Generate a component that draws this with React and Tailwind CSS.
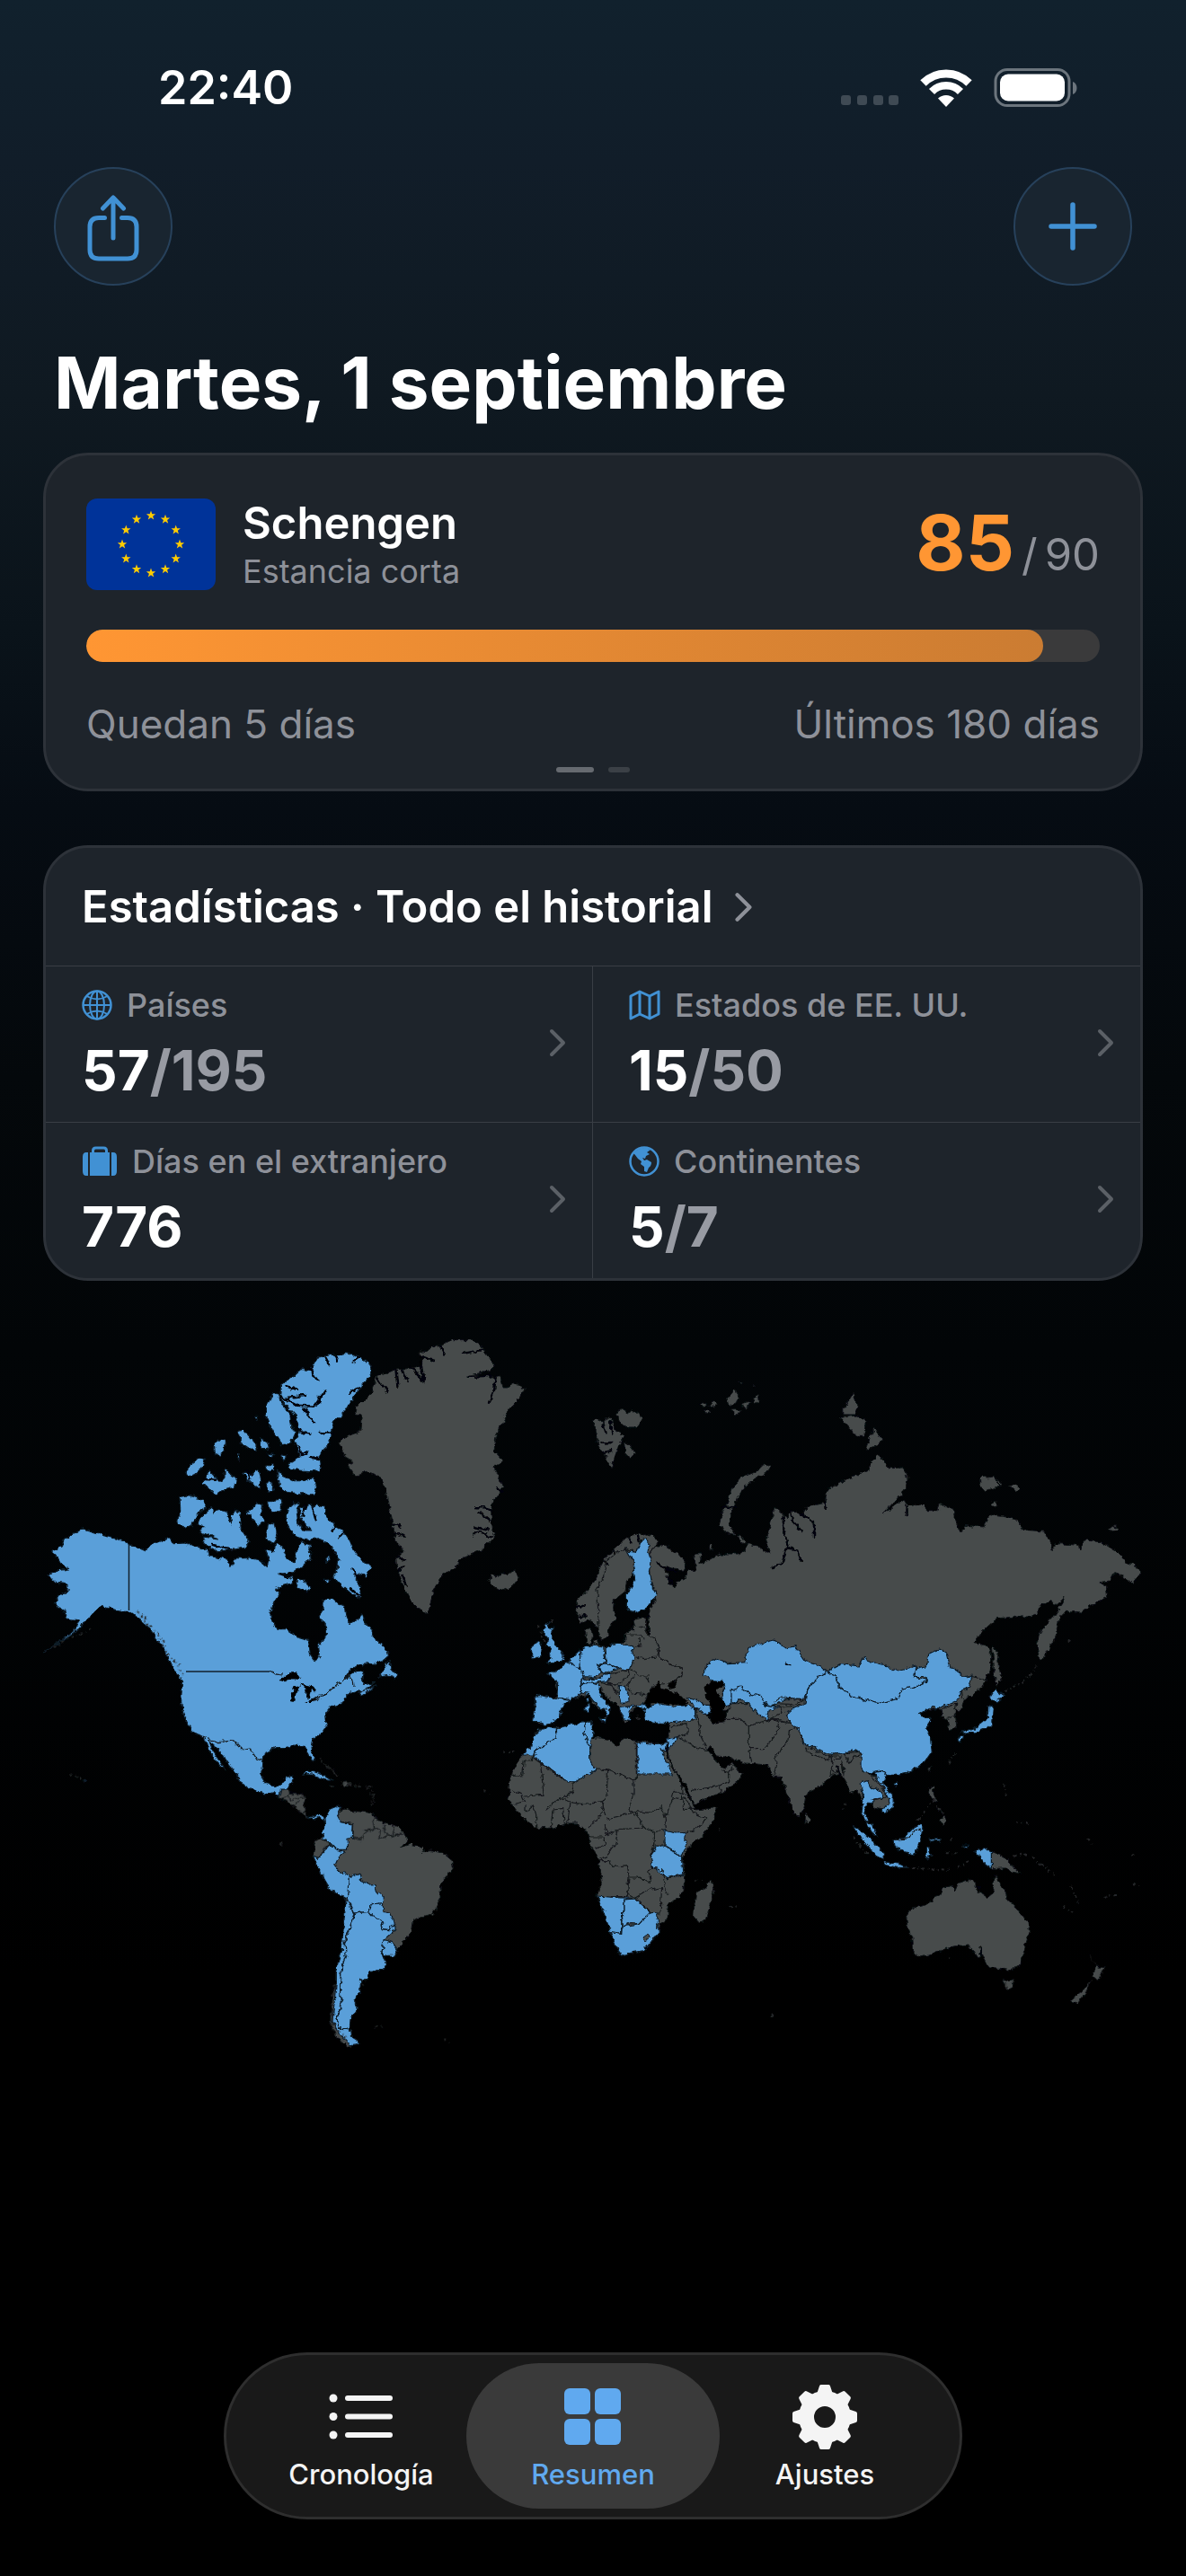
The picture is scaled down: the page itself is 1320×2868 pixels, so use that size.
import React from 'react';

const stats = [
  { icon: GlobeIcon, label: 'Países', value: '57', total: '/195' },
  { icon: MapIcon, label: 'Estados de EE. UU.', value: '15', total: '/50' },
  { icon: SuitcaseIcon, label: 'Días en el extranjero', value: '776', total: '' },
  { icon: AmericasIcon, label: 'Continentes', value: '5', total: '/7' },
];

const tabs = [
  { icon: ListIcon, label: 'Cronología' },
  { icon: GridIcon, label: 'Resumen', active: true },
  { icon: GearIcon, label: 'Ajustes' },
];

function SignalDots() {
  return (
    <svg className="h-3 w-16" viewBox="0 0 64 12" fill="#3f4a54">
      {[0, 18, 36, 53].map((x) => (
        <rect key={x} x={x} width="11" height="11" rx="3" />
      ))}
    </svg>
  );
}

function WifiIcon() {
  return (
    <svg className="h-11 w-[58px]" viewBox="0 0 58 44" fill="none" stroke="#fff">
      <path d="M3.500 16.500A36 36 0 0 1 54.500 16.500" strokeWidth="9" />
      <path d="M13 26A22.500 22.500 0 0 1 45 26" strokeWidth="8.500" />
      <path d="M29 43L20 33.500A13 13 0 0 1 38 33.500Z" fill="#fff" stroke="none" />
    </svg>
  );
}

function BatteryIcon() {
  return (
    <svg className="h-11 w-[94px]" viewBox="0 0 94 44">
      <rect x="2" y="1.500" width="82" height="40" rx="13" fill="none" stroke="#6c757d" strokeWidth="3" />
      <rect x="7" y="6.500" width="72" height="30" rx="9" fill="#fff" />
      <path d="M88 15C94 17 94 27 88 29Z" fill="#6c757d" />
    </svg>
  );
}

function ShareIcon() {
  return (
    <svg
      className="h-20 w-16"
      viewBox="0 0 64 80"
      fill="none"
      stroke="#4191d4"
      strokeWidth="5"
      strokeLinecap="round"
      strokeLinejoin="round"
    >
      <path d="M22.500 30.500H16Q6 30.500 6 40.500V66Q6 76 16 76H48Q58 76 58 66V40.500Q58 30.500 48 30.500H41.500" />
      <path d="M32 53V9M20.500 20L32 8L43.500 20" />
    </svg>
  );
}

function PlusIcon() {
  return (
    <svg className="h-14 w-14" viewBox="0 0 56 56" stroke="#4191d4" strokeWidth="5.500" strokeLinecap="round">
      <path d="M28 4V52M4 28H52" />
    </svg>
  );
}

function GlobeIcon() {
  return (
    <svg className="h-[34px] w-[34px]" viewBox="0 0 34 34" fill="none" stroke="#4191d4" strokeWidth="2">
      <circle cx="17" cy="17" r="15.500" strokeWidth="2.500" />
      <ellipse cx="17" cy="17" rx="8" ry="15.500" />
      <path d="M17 1.500V32.500M1.500 17H32.500M5.500 7Q17 14 28.500 7M5.500 27Q17 20 28.500 27" />
    </svg>
  );
}

function MapIcon() {
  return (
    <svg
      className="h-[34px] w-[35px]"
      viewBox="0 0 35 34"
      fill="none"
      stroke="#4191d4"
      strokeWidth="3"
      strokeLinejoin="round"
    >
      <path d="M2 7L12 2L23 7L33 2V27L23 32L12 27L2 32ZM12 2V27M23 7V32" />
    </svg>
  );
}

function SuitcaseIcon() {
  return (
    <svg className="h-[34px] w-10" viewBox="0 0 40 34" fill="#4191d4">
      <path d="M12.500 7V5Q12.500 2 15.500 2H24.500Q27.500 2 27.500 5V7" fill="none" stroke="#4191d4" strokeWidth="3" />
      <rect x="9" y="7" width="22" height="26" />
      <path d="M7 7V33H5Q1 33 1 28V12Q1 7 5 7ZM33 7V33H35Q39 33 39 28V12Q39 7 35 7Z" />
    </svg>
  );
}

function AmericasIcon() {
  return (
    <svg className="h-[34px] w-[34px]" viewBox="0 0 34 34" fill="#4191d4">
      <circle cx="17" cy="17" r="15.500" fill="none" stroke="#4191d4" strokeWidth="2.500" />
      <path d="M5 8Q10 2 18 2L24 4L20 7L23 9L19 11L18 14L15 13L17 16L20 15L25 18Q25 22 22 24L20 29L17 28L17 23L13 20L14 17L10 14L7 10Z" />
    </svg>
  );
}

function Chevron({ className }) {
  return (
    <svg
      className={className}
      viewBox="0 0 20 32"
      fill="none"
      stroke="currentColor"
      strokeWidth="4"
      strokeLinecap="round"
      strokeLinejoin="round"
    >
      <path d="M3 3L16 16L3 29" />
    </svg>
  );
}

function ListIcon() {
  return (
    <svg className="h-[72px] w-[72px]" viewBox="0 0 72 72" fill="#f4f4f4">
      {[15, 35.500, 56].map((y) => (
        <g key={y}>
          <circle cx="5" cy={y} r="4.500" />
          <rect x="18" y={y - 3} width="53" height="6" rx="3" />
        </g>
      ))}
    </svg>
  );
}

function GridIcon() {
  return (
    <svg className="h-[72px] w-[72px]" viewBox="0 0 72 72" fill="#60a9ef">
      <rect x="4" y="4" width="29" height="29" rx="6" />
      <rect x="38" y="4" width="29" height="29" rx="6" />
      <rect x="4" y="38" width="29" height="29" rx="6" />
      <rect x="38" y="38" width="29" height="29" rx="6" />
    </svg>
  );
}

function GearIcon() {
  return (
    <svg className="h-[72px] w-[72px]" viewBox="-36 -36 72 72">
      <circle r="20.500" fill="none" stroke="#f4f4f4" strokeWidth="17" />
      {[0, 45, 90, 135, 180, 225, 270, 315].map((a) => (
        <path
          key={a}
          transform={`rotate(${a})`}
          d="M-7 -25L-4 -34H4L7 -25Z"
          fill="#f4f4f4"
          stroke="#f4f4f4"
          strokeWidth="4"
          strokeLinejoin="round"
        />
      ))}
    </svg>
  );
}

function EuFlag() {
  const stars = Array.from({ length: 12 }, (_, i) => {
    const a = (i * Math.PI) / 6;
    return [72 + 32 * Math.sin(a), 51 - 32 * Math.cos(a)];
  });
  return (
    <svg className="h-[102px] w-36 rounded-xl" viewBox="0 0 144 102">
      <rect width="144" height="102" fill="#039" />
      {stars.map(([x, y]) => (
        <path
          key={`${x}-${y}`}
          transform={`translate(${x} ${y})`}
          d="M0 -5.500L1.300 -1.700L5.200 -1.700L2.100 .7L3.200 4.500L0 2.200L-3.200 4.500L-2.100 .7L-5.200 -1.700L-1.300 -1.700Z"
          fill="#fc0"
        />
      ))}
    </svg>
  );
}

// Each region of the map has its own grid, so its shapes share one transform.
const regions = {
  north: 'translate(0 -10) scale(.33333 .35714)',
  greenland: 'translate(320 -10) scale(.33333)',
  south: 'translate(240 480) scale(.33333)',
  russia: 'translate(600 50) scale(.42088 .33333)',
  west: 'translate(520 220) scale(.33333)',
  east: 'translate(720 320) scale(.34438 .33333)',
};

const land = [
  ['russia', 'M195 570L240 575L275 600L295 630L285 655L250 650L220 632L245 665L250 700L265 712L270 690L290 685L300 655L320 655L315 600L335 600L330 635L350 625L385 600L430 600L450 590L452 565L485 575L515 600L505 550L520 480L530 445L548 465L560 480L570 455L600 470L615 440L660 430L668 385L720 350L780 320L780 300L800 268L820 290L828 315L865 312L880 345L875 380L845 425L815 465L870 420L880 440L915 435L930 455L960 455L965 430L1000 450L1005 490L1020 530L1035 505L1080 510L1095 470L1130 475L1165 485L1190 520L1240 525L1255 560L1262 590L1270 565L1320 570L1340 585L1345 555L1390 560L1430 590L1460 630L1485 640L1495 665L1475 700L1450 675L1425 665L1415 690L1385 695L1405 710L1408 745L1360 775L1340 795L1300 790L1280 815L1270 880L1240 945L1228 955L1220 900L1235 850L1265 810L1290 765L1295 745L1275 770L1255 760L1235 765L1210 810L1170 810L1115 815L1085 850L1055 895L1085 905L1098 920L1100 985L1085 1020L1060 1065L1030 1085L1020 1120L200 1120L195 800L215 740L200 680Z'],
  ['russia', 'M500 300L517 305L505 330L465 360L440 385L425 430L410 470L410 510L425 535L400 530L380 505L390 460L402 430L415 380L440 345L480 325Z'],
  ['russia', 'M428 540L440 540L450 560L445 568Z'],
  ['russia', 'M48 155L60 150L75 165L80 150L95 145L105 185L130 205L115 240L95 315L78 270L60 230ZM108 130L125 118L140 130L150 118L180 145L165 180L140 180L115 155ZM130 225L145 235L158 265L145 282L132 262Z'],
  ['russia', 'M330 100L345 98L345 108L335 110ZM350 105L372 88L376 100L366 112L358 106ZM340 120L358 122L350 135ZM402 82L425 48L432 75L425 100L405 104ZM442 98L465 90L455 115L446 112ZM470 85L485 70L488 90L475 98ZM412 120L438 118L428 136ZM430 28L440 26L438 32ZM468 36L478 38L472 42Z'],
  ['russia', 'M710 115L735 65L748 110L740 135L710 135ZM700 145L745 138L768 155L765 205L745 205L722 175ZM768 250L790 180L812 220L800 238Z'],
  ['russia', 'M1070 345L1080 338L1090 348L1110 345L1120 375L1085 390L1072 370ZM1145 370L1160 368L1178 380L1165 390ZM1115 350L1130 360L1125 378ZM1100 430L1110 424L1118 438L1108 446ZM1408 515L1425 505L1437 518L1418 526ZM355 582L358 570L366 575L362 588Z'],
  ['russia', 'M1103 905L1118 930L1120 980L1130 1010L1114 1040L1108 980Z'],
  ['west', 'M245 240L270 225L300 190L322 145L335 110L370 75L410 40L455 18L475 28L500 25L515 50L490 90L445 90L430 85L435 150L440 158L412 180L408 215L370 245L368 275L378 305L355 335L345 370L328 378L318 345L306 322L285 310L260 325L245 300Z'],
  ['west', 'M275 345L295 340L298 365L295 390L278 390ZM304 380L318 375L318 390L306 390Z'],
  ['west', 'M475 300L435 310L440 335L425 345L408 358L408 385L375 392L340 400L300 390L285 405L258 410L245 435L215 455L180 480L148 490L175 512L180 560L165 572L105 565L105 650L135 660L180 640L190 605L225 578L245 570L285 560L300 590L340 615L345 630L330 645L345 640L360 610L330 580L315 545L325 535L345 570L385 600L395 630L405 655L418 655L420 625L450 600L470 590L480 560L500 530L565 520L595 500L600 475L560 460L520 430L520 410L510 372L478 360Z'],
  ['west', 'M555 655L600 645L640 645L645 580L700 655L740 650L760 590L900 590L1200 600L1200 780L1170 820L1110 825L1080 850L1010 895L1005 940L985 970L965 945L950 900L935 860L930 835L905 835L880 795L800 788L760 770L715 765L690 730L680 745L720 795L740 808L765 785L775 805L800 825L775 860L720 890L640 925L630 910L610 860L575 815L560 780L548 745L552 700Z'],
  ['west', 'M1010 955L1025 980L1018 992L1008 990Z'],
  ['west', 'M130 672L175 670L225 660L295 650L300 690L290 705L330 705L385 730L400 705L445 715L490 722L545 722L540 740L560 790L600 870L625 920L640 945L712 938L705 975L670 1025L620 1070L598 1105L605 1160L603 1220L550 1260L550 1310L525 1325L520 1355L470 1415L440 1420L395 1430L378 1405L360 1350L340 1300L312 1235L330 1180L320 1110L290 1070L285 1020L245 990L215 990L165 1005L115 1008L70 975L30 930L18 905L25 830L60 765L95 730L105 690Z'],
  ['west', 'M693 1180L705 1215L690 1270L675 1310L655 1323L635 1300L643 1225L670 1210Z'],
  ['east', 'M-5 560L20 600L40 640L5 640L0 620ZM480 460L580 450L600 530L640 535L668 600L668 625L650 645L620 640L605 600L578 560L585 640L575 600L560 580L540 590L530 555L515 530L500 515L480 530Z'],
  ['east', 'M900 235L935 200L980 210L960 240L935 268L905 272Z'],
  ['east', 'M835 310L885 288L880 320L885 370L860 378L855 345L835 330Z'],
  ['east', 'M795 510L805 492L800 522ZM798 570L808 568L812 598L822 615L805 610L797 595ZM832 685L845 665L852 680L842 698ZM820 630L830 640L826 650ZM835 645L842 655L838 662Z'],
  ['east', 'M997 785L1035 800L1060 825L1070 840L1090 858L1065 852L1045 840L1030 840L997 842Z'],
  ['east', 'M722 1000L745 970L805 955L815 935L830 930L840 905L865 900L880 915L890 890L925 878L950 885L945 910L985 938L1000 925L1010 860L1025 900L1040 910L1050 945L1085 980L1090 995L1115 1015L1120 1055L1105 1110L1085 1170L1050 1180L1030 1175L990 1170L970 1130L955 1140L945 1125L920 1095L850 1105L825 1120L765 1135L742 1120L740 1070L725 1030Z'],
  ['east', 'M1035 1212L1052 1218L1070 1210L1065 1240L1050 1245ZM1312 1130L1330 1155L1340 1170L1365 1172L1340 1215L1325 1200L1335 1165ZM1320 1215L1300 1260L1275 1292L1252 1280L1290 1250Z'],
  ['south', 'M88 120L103 95L118 90L128 112L160 112L180 122L175 150L178 170L190 192L165 175L145 155L118 135L95 130ZM298 74L318 72L330 82L305 86ZM262 84L280 86L270 90ZM342 84L352 84L350 88Z'],
  ['south', 'M243 195L262 165L300 150L295 170L310 160L345 170L375 172L405 178L410 190L445 212L490 220L510 245L520 265L500 290L530 280L570 290L575 305L600 302L640 310L670 335L673 360L650 390L632 410L630 455L612 500L600 515L565 522L537 540L532 575L510 600L488 632L480 650L455 652L435 645L448 680L440 700L395 703L390 730L365 735L362 775L342 800L355 825L330 865L328 895L335 925L365 945L320 955L285 925L265 880L270 800L280 740L283 690L300 640L308 540L315 462L260 425L235 385L205 320L210 280L218 265L232 255L245 225Z'],
  ['greenland', 'M50 410L85 385L125 370L130 320L105 310L108 290L145 260L165 235L175 190L240 165L290 160L325 150L335 125L320 110L360 92L400 78L430 65L490 65L525 85L545 115L570 145L560 170L500 180L555 190L590 185L600 225L618 225L635 205L672 230L655 260L630 285L610 310L600 340L590 355L575 390L570 440L600 470L570 490L595 545L600 560L570 600L560 640L565 700L568 730L530 765L465 790L440 825L400 850L375 885L360 930L350 980L320 965L290 935L265 885L245 830L242 790L270 770L245 745L235 700L225 650L215 590L200 545L180 520L145 508L105 520L80 485L100 470L70 455L65 430Z'],
  ['greenland', 'M550 868L562 860L560 845L575 855L595 845L615 848L640 836L650 862L635 885L600 902L575 892L565 878Z'],
];

const visited = [
  ['north', 'M52 720L85 705L95 682L130 665L152 650L190 662L240 672L290 685L310 697L340 708L368 716L385 700L415 688L445 676L462 696L500 694L540 706L575 716L580 735L620 742L640 745L652 770L660 742L700 740L740 745L772 768L778 742L765 715L795 722L800 695L822 705L840 745L862 752L872 715L885 690L915 700L918 745L890 765L862 785L820 790L858 800L855 822L800 835L815 850L795 880L782 915L790 940L805 965L840 965L880 990L908 998L912 1035L930 1060L946 1055L940 1015L965 990L970 960L955 940L945 920L960 900L960 870L990 868L1010 885L1030 890L1035 925L1050 945L1070 935L1090 915L1098 940L1120 965L1130 995L1165 1015L1178 1045L1160 1060L1130 1070L1075 1075L1045 1095L1030 1118L1075 1090L1095 1095L1088 1120L1100 1135L1130 1130L1100 1150L1080 1165L1075 1155L1050 1160L1030 1180L1025 1195L985 1205L965 1230L970 1265L955 1285L925 1305L918 1330L932 1370L925 1378L910 1350L900 1328L860 1325L835 1332L800 1332L760 1350L755 1380L752 1415L770 1445L795 1452L820 1445L830 1425L860 1420L855 1440L835 1462L820 1462L818 1480L810 1485L795 1472L770 1478L720 1462L680 1440L670 1415L645 1385L620 1350L595 1325L578 1310L590 1340L610 1370L630 1400L615 1390L585 1355L570 1325L558 1300L520 1280L500 1245L488 1215L485 1185L488 1120L460 1090L445 1060L425 1020L395 985L380 960L355 940L320 912L290 910L255 900L225 890L195 905L175 930L145 960L110 985L60 1015L25 1035L80 1000L130 965L145 935L100 930L95 905L60 885L75 860L105 845L105 820L60 815L40 795L75 780L110 775L85 760L70 735Z'],
  ['north', 'M1145 1112L1165 1080L1180 1060L1185 1085L1205 1105L1200 1118L1175 1108ZM1075 1162L1110 1148L1140 1138L1090 1168Z'],
  ['north', 'M818 200L850 180L885 152L915 155L940 115L985 108L1035 102L1080 115L1105 125L1122 155L1105 185L1080 215L1060 240L1030 285L995 315L985 350L980 385L955 405L945 430L950 465L930 470L880 468L845 462L840 450L880 425L870 390L860 380L880 350L870 300L830 260L815 235Z'],
  ['north', 'M795 225L812 235L825 265L848 290L855 340L870 345L850 385L820 388L800 360L780 325L768 300L770 265Z'],
  ['north', 'M805 465L825 485L860 500L900 500L925 495L938 520L930 540L880 540L830 535L812 520ZM675 345L695 342L715 365L735 385L735 405L712 402L685 385ZM750 368L775 385L778 402L755 402ZM595 385L615 372L632 375L628 400L612 425L598 415ZM670 415L680 420L678 438ZM730 298L740 298L738 312ZM770 415L795 418L780 428ZM820 422L835 425L828 440Z'],
  ['north', 'M500 478L515 450L545 430L565 435L555 460L530 480L510 488ZM555 510L580 470L600 490L615 505L630 490L630 460L650 480L670 495L665 520L620 530L595 545L580 525ZM690 475L720 480L745 465L752 500L745 525L728 515L705 495ZM768 510L785 502L795 530L775 535ZM765 450L790 450L795 468L770 470Z'],
  ['north', 'M480 550L510 545L560 560L572 580L545 600L520 640L495 648L470 625L482 590ZM545 620L570 600L585 580L590 600L610 592L640 600L652 635L658 590L680 600L685 650L712 690L695 710L650 715L600 720L560 695L560 675L610 680L545 660L560 645L540 635ZM705 600L740 570L755 575L750 600L762 625L745 640L725 620ZM775 565L825 560L815 590L795 600L780 590ZM775 632L795 632L805 680L795 695L768 685Z'],
  ['north', 'M838 590L860 570L880 570L870 590L875 630L890 655L920 655L885 620L880 585L915 572L925 590L930 572L965 580L965 610L1000 640L1030 660L1050 690L1060 715L1090 750L1118 765L1105 800L1080 790L1065 800L1085 835L1080 868L1050 850L1020 825L990 800L1005 780L1010 745L990 710L970 690L940 680L900 685L870 675L850 658L838 630ZM870 830L875 805L900 815L918 832L900 845L880 840ZM965 740L980 732L982 750L968 752ZM955 810L980 808L975 822Z'],
  ['north', 'M890 1412L910 1403L940 1410L965 1422L990 1436L960 1432L920 1414ZM160 1434L166 1438L160 1442Z'],
  ['south', 'M185 185L210 190L225 180L243 188L241 204L225 190L205 198Z'],
  ['south', 'M243 195L262 165L300 150L285 180L297 205L340 213L338 258L318 262L320 298L285 298L262 275L232 262L245 225Z'],
  ['south', 'M205 318L222 325L260 280L285 298L312 305L290 325L278 352L290 370L312 375L325 392L325 435L318 462L260 428L235 385Z'],
  ['south', 'M325 392L360 375L365 400L412 420L415 440L438 450L440 480L400 478L392 505L342 510L330 485L320 455Z'],
  ['south', 'M345 510L392 505L405 522L440 540L432 562L460 567L480 545L480 565L442 598L435 645L448 680L440 700L395 703L390 730L365 732L362 775L342 800L355 825L330 865L328 895L290 893L282 860L300 830L298 760L300 700L312 650L315 600L335 545Z'],
  ['south', 'M400 480L438 476L440 505L465 512L475 548L460 565L432 562L440 540L405 522L392 505Z'],
  ['south', 'M442 598L470 608L488 632L478 652L455 652L435 645Z'],
  ['south', 'M316 462L325 480L342 512L332 545L312 600L315 650L298 700L296 760L298 830L280 860L292 895L328 896L332 925L365 945L330 950L290 910L270 870L283 740L283 690L300 640L308 540Z'],
  ['west', 'M408 68L420 82L445 85L458 50L475 42L490 60L485 85L495 115L490 150L500 205L512 228L475 275L435 288L412 270L412 225L440 180L432 110Z'],
  ['west', 'M138 330L155 318L150 335L168 338L158 358L172 385L188 410L205 432L200 448L165 455L145 455L162 440L150 425L160 405L145 395L148 370L135 355ZM95 400L118 382L130 395L128 430L95 438Z'],
  ['west', 'M105 565L120 562L185 573L222 580L195 605L190 635L165 655L135 662L122 650L100 650L108 600Z'],
  ['west', 'M148 490L180 478L215 452L245 465L270 480L270 505L258 530L262 555L225 578L180 570L182 520Z'],
  ['west', 'M215 452L240 430L260 410L260 470L245 468Z'],
  ['west', 'M258 412L290 395L335 402L342 450L315 460L325 490L300 502L270 500L255 465Z'],
  ['west', 'M342 402L375 388L430 398L435 440L425 475L400 478L345 455Z'],
  ['west', 'M315 462L345 455L380 475L350 485L328 487Z'],
  ['west', 'M258 515L290 505L325 505L340 490L362 490L350 515L300 520L265 530Z'],
  ['west', 'M262 530L290 518L320 525L318 545L335 575L362 608L355 615L345 638L335 610L300 580L285 560L262 555ZM322 640L345 640L340 655ZM275 598L288 596L286 620L277 622ZM278 575L287 573L285 588L280 588Z'],
  ['west', 'M388 530L405 530L418 560L420 580L400 590L388 565ZM390 605L425 598L445 598L420 610L425 650L405 645ZM440 598L470 592L485 600L470 608Z'],
  ['west', 'M470 610L500 595L520 590L570 600L610 595L640 605L642 642L590 650L555 655L500 655L475 640Z'],
  ['west', 'M612 570L650 580L670 595L690 595L695 620L670 622L655 610L640 598Z'],
  ['west', 'M545 710L560 705L590 700L570 725L550 745Z'],
  ['west', 'M672 470L712 440L750 455L810 452L818 405L860 390L905 378L945 405L975 398L1010 450L1050 460L1080 482L1060 510L1040 515L1015 545L1005 575L940 575L900 600L870 590L830 560L790 535L765 545L762 590L745 600L725 570L740 545L735 520L690 515L685 500L670 495Z'],
  ['west', 'M762 590L762 543L790 535L830 560L860 562L872 595L920 600L890 612L880 645L845 620L820 590L790 578Z'],
  ['west', 'M130 672L175 670L178 708L150 720L105 748L100 762L65 762L92 735L100 700Z'],
  ['west', 'M175 675L225 660L275 652L270 690L290 720L290 780L310 810L235 855L205 845L105 770L105 748L150 720L178 708Z'],
  ['west', 'M275 652L295 650L300 685L290 735L270 690Z'],
  ['west', 'M447 720L490 726L545 722L540 750L525 738L565 825H447Z'],
  ['west', 'M540 1010L575 1020L610 1018L608 1070L595 1098L540 1065Z'],
  ['west', 'M508 1068H540L595 1100L600 1165L550 1172L500 1140L493 1100Z'],
  ['west', 'M312 1233L380 1238L430 1240L405 1245V1285L395 1290V1360L360 1358L340 1300Z'],
  ['west', 'M360 1355L395 1360L397 1335L455 1325L490 1288L515 1290L520 1355L470 1415L440 1420L395 1430L378 1405Z'],
  ['west', 'M405 1245L445 1242L490 1288L455 1325L425 1322L400 1335L397 1290L405 1285Z'],
  ['east', 'M340 315L395 290L400 245L425 212L465 180L500 205L500 235L555 268L640 288L690 275L710 240L745 235L790 215L780 200L748 200L755 172L785 165L795 125L830 108L855 125L865 170L895 185L910 205L935 195L925 235L900 245L895 275L850 295L815 315L815 300L795 305L765 325L780 340L805 340L785 370L800 405L805 450L785 480L745 515L690 528L660 530L645 515L605 525L578 510L578 460L555 445L520 455L480 460L430 440L385 420L380 385L350 360L335 330Z'],
  ['east', 'M468 182L510 158L570 165L580 138L610 150L650 160L690 180L755 165L748 200L790 212L745 235L710 240L690 275L640 288L555 268L500 235L500 205Z'],
  ['east', 'M572 555L600 548L612 575L640 580L645 605L615 610L615 625L595 625L588 650L605 690L590 680L578 650L585 600ZM615 520L650 515L662 530L645 550L660 575L680 605L680 635L650 660L645 650L668 620L660 590L640 555L625 535ZM590 685L615 695L628 735L605 715ZM680 555L697 550L690 565Z'],
  ['east', 'M548 700L575 712L620 755L648 790L648 810L625 800L590 760ZM650 818L700 825L732 838L690 838L655 828ZM682 745L715 738L750 700L765 690L775 705L768 745L750 795L700 780L685 765ZM785 770L800 775L798 785L808 800L795 795L792 812L785 795ZM798 744L835 742L832 748L800 750ZM905 765L925 765L920 775ZM940 785L965 772L997 785V842L975 825L965 805Z'],
  ['east', 'M990 272L1010 240L1040 265L1012 285ZM990 295L1003 305L998 360L985 372L950 385L915 390L900 385L945 370L970 350L988 335ZM892 395L905 395L900 418L892 412Z'],
];

const lesotho = 'M468 1370L482 1360L490 1370L475 1382ZM508 1325L516 1328L512 1340Z';

const water = [
  ['north', 'M812 1122L845 1098L870 1098L885 1120L850 1118L830 1127ZM862 1140L882 1138L868 1165L865 1190L853 1188L855 1160ZM885 1133L925 1140L935 1158L918 1150L912 1180L900 1175L902 1150ZM900 1190L930 1178L945 1172L925 1190ZM945 1170L975 1158L970 1166Z'],
  ['west', 'M670 535L700 515L735 515V535L712 540L725 570L740 590L735 620L742 645L710 655L695 640L697 600L680 570ZM475 590L485 550L505 530L520 515L530 540L550 545L600 565L618 590L600 598L560 592L520 588ZM545 535L560 520L585 515L575 535L555 540Z'],
];

const inlets = [
  ['north', 'M820 240L870 265L930 268L965 220M895 275L930 320M850 290L885 348L915 355M1050 225L1080 208M915 150L940 188M880 395L885 420L905 410M940 240L950 250M965 115L978 138M1000 105L1008 125M1060 130L1080 118M835 205L870 215M840 240L900 235M950 350L990 352M915 425L945 432M560 495L600 498M705 468L712 492M925 590L935 625M900 575L892 610M1000 640L990 655M1030 660L1015 675M1055 775L1075 800M1050 835L1080 860M590 700L650 712M815 790L850 802'],
  ['greenland', 'M180 195L212 238M242 170L247 218M262 165L280 198M290 155L335 205L325 140M485 188L555 185M575 190L570 235L555 272M465 112L530 98M325 120L368 135M388 85L402 112M498 718L520 705L560 725M510 625L540 625L565 640M520 640L555 668M505 690L545 700M580 560L600 575M235 680L262 690M238 710L270 722M245 790L270 800M248 840L270 820M262 850L275 885'],
  ['russia', 'M550 470L552 520L562 570L548 630L522 645M562 580L585 585L597 620M570 455L575 490L598 522M598 465L632 495L632 545M660 430L662 452M878 440V468M75 165L82 200M92 160L98 200M70 230L100 228M75 262L98 255M388 440L425 446'],
  ['west', 'M515 120L545 140L580 150M545 165L565 190M245 270L275 262M250 300L275 295M335 115L350 125M365 78L375 90M420 40L428 55M450 25L455 45M430 325L438 345M545 745L550 725M945 455L958 462'],
  ['east', 'M948 895L960 912M960 1105L968 1130M500 500L505 525M515 490L518 520'],
];

const borders = [
  ['north', 'M780 1092L800 1102L825 1106M925 1186L945 1180L990 1148L1040 1105L1060 1120L1062 1145M558 1300L610 1315L660 1310L690 1338L715 1332L735 1365L755 1372'],
  ['south', 'M297 205L340 213L338 258L365 265L380 240L410 230L405 200L410 190M410 220L430 235L425 260M440 215L445 245L475 252M475 220L472 250L490 252L500 235M370 235L412 230M425 260L450 255L480 250L508 245M100 130L125 115L130 132L150 125L178 122M145 150L160 132M232 262L262 278L222 325M165 175L180 172'],
  ['west', 'M318 345L315 205L335 165L345 110L375 90L408 70L435 82M435 335L455 330L478 340M410 360L455 360L475 372M475 300L478 360L510 372L520 410L515 435L470 440L440 435M455 370L460 395L435 400M520 430L560 460L600 475L595 500L565 520M425 475L460 495L490 495M440 495L415 530L430 555L475 560M470 495L490 520M360 490L420 480L415 500L380 530L350 520L390 560M325 520L360 530L380 560'],
  ['west', 'M645 610L660 700L680 740M745 640L790 640L820 665L820 735L830 785M820 665L855 655L900 640L920 650M820 740L870 740L915 690L920 650L960 655M905 830L915 790L905 770L950 720L955 680L990 670L1000 720M560 670L615 655L615 690L580 705M590 705L650 740L680 745M630 880L720 865L730 885M720 865L755 850L755 820L730 815M755 820L765 800M1010 735L1090 765L1085 780L1015 752ZM1090 765L1130 765L1125 775L1095 775ZM1100 780L1095 800L1105 820M1130 780L1140 810M905 585L930 570L1005 575L960 600L920 600L930 620L890 640L920 650M880 645L900 640L950 650'],
  ['west', 'M310 810L350 812L435 848L445 848V720M435 848V895L420 940L440 965M350 812L345 900L330 920L345 965M235 855L230 890L190 905L140 945M105 775L200 840M125 790L135 895L70 900M25 832L65 830L70 780L100 780V762M230 920L260 925L335 920L330 960L285 1005M215 990L225 920L195 905M345 975L395 965L440 950L470 1005L385 1010L345 1030L340 990M440 950L490 955L530 935L540 970L545 1010M540 970L570 905L610 910L635 955L680 975L640 1010L610 1018M565 905L570 880L610 895M385 1010L375 1060L345 1100L320 1110M320 1115L355 1115L365 1135L415 1130L420 1170L415 1235L360 1235M420 1170L450 1170L490 1190L485 1145L500 1140M470 1005L505 1020L505 1050L495 1100M505 1020L540 1012M415 1190L420 1230L440 1240L480 1215L530 1205L525 1290L515 1290M440 1240L495 1288M530 1140L540 1200L550 1225M500 1140L540 1150M550 1172L603 1160M290 1035L335 1035L345 1060L310 1075M30 885L60 890L75 920L30 930M75 930L75 950L100 930L110 960L110 1005M160 1005L165 945L200 940L205 990M505 1065L540 1065'],
  ['east', 'M685 745L735 740L750 712L770 712M855 340L880 332M520 455L540 490L555 465L578 460M515 490L520 530M600 530L620 545L645 570L660 600M610 610L650 605L665 600'],
];

const islets = [
  ['north', 'M340 905L365 925L380 950L405 975L425 1005M350 920L370 945L395 985M425 1010L440 1040L470 1070L495 1110M945 1365L970 1390L1005 1415M115 1415L145 1424L160 1434M1045 1445L1120 1455L1130 1490L1120 1510M60 1020L110 990L170 970L190 950'],
  ['south', 'M275 745L270 800L268 860L275 910L300 935L340 960M370 745L378 755M410 890L440 888M640 930L662 942M95 278L112 285M230 0L290 50M385 90L405 120L400 150M775 100L795 110M285 900L320 930'],
  ['west', 'M120 330L130 370M160 310L170 320M135 375L138 390M0 755L40 750M430 610L460 650M330 540L360 575M720 1010L722 1012M640 1180L665 1182M755 1270L780 1268M340 605L345 610'],
  ['east', 'M1040 250L1090 225L1130 190L1150 150M550 735L600 795M810 610L835 650M760 680L800 625M740 840L860 845M850 790L890 790M865 740L870 760M1070 800L1110 790M1130 805L1205 865M1230 965L1260 990M1255 900L1280 960M1360 935L1400 930M1040 560L1045 600M1245 80L1262 90M860 490L880 455M1075 685L1120 690M1310 740L1320 760M285 1330L298 1332M890 840L930 810M1450 800L1470 795M1455 890L1475 900M520 620L522 650M150 970L175 965M860 1140L862 1141'],
];

function Shapes({ items, ...props }) {
  return (
    <g strokeLinejoin="round" {...props}>
      {items.map(([region, d]) => (
        <path key={region + d} d={d} transform={regions[region]} vectorEffect="non-scaling-stroke" />
      ))}
    </g>
  );
}

function WorldMap() {
  return (
    <svg className="w-full" viewBox="0 0 1240 820" role="img" aria-label="Mapa de países visitados">
      <filter id="coast" x="0" y="0" width="100%" height="100%">
        <feTurbulence type="fractalNoise" baseFrequency="0.16" numOctaves="3" seed="4" />
        <feDisplacementMap in="SourceGraphic" scale="6" xChannelSelector="R" yChannelSelector="G" />
      </filter>
      <g filter="url(#coast)">
        <Shapes items={land} fill="#474b4c" stroke="#0d1114" strokeWidth="1" />
        <Shapes items={visited} fill="#5a9fd9" stroke="#0d1b27" strokeWidth="1.200" />
        <Shapes items={[['west', lesotho]]} fill="#474b4c" stroke="#0d1b27" strokeWidth="1" />
        <Shapes items={water} fill="#010203" />
        <Shapes items={inlets} fill="none" stroke="#030608" strokeWidth="2.500" strokeLinecap="round" />
        <Shapes items={borders} fill="none" stroke="#14181a" strokeWidth="1.200" />
        <Shapes items={islets} fill="none" stroke="#25282a" strokeWidth="2" strokeDasharray="3 4 1 3" />
      </g>
      <path
        d="M103.500 240V313M167 381H260"
        fill="none"
        stroke="#12202c"
        strokeWidth="1.500"
      />
    </svg>
  );
}

function StatCell({ icon: Icon, label, value, total }) {
  return (
    <button className="flex items-center justify-between border-t border-[#393e45] pt-[18px] pb-[21px] pl-10 pr-7 text-left odd:border-r">
      <span>
        <span className="flex h-[50px] items-center gap-4 text-4xl font-medium text-[#8e9199]">
          <Icon />
          {label}
        </span>
        <span className="mt-3 block text-[62px] leading-[72px] font-bold text-white">
          {value}
          <span className="text-[#989ba3]">{total}</span>
        </span>
      </span>
      <Chevron className="h-8 w-5 text-[#5b6066]" />
    </button>
  );
}

export default function App() {
  return (
    <div className="flex min-h-screen flex-col bg-black bg-[linear-gradient(180deg,#11212d_0px,#111d29_180px,#0f1921_440px,#0a131a_700px,#060c13_900px,#04080b_1200px,#020507_1500px,#000_2200px)] pb-[63px] font-['Inter',sans-serif]">
      <div className="flex h-[196px] items-center justify-between pr-[120px] pl-44 text-white">
        <span className="text-[52px] font-semibold">22:40</span>
        <div className="flex items-center gap-6">
          <span className="pt-7">
            <SignalDots />
          </span>
          <WifiIcon />
          <BatteryIcon />
        </div>
      </div>

      <header className="-mt-[10px] px-[60px]">
        <div className="flex justify-between">
          <button
            aria-label="Compartir"
            className="flex h-[132px] w-[132px] items-center justify-center rounded-full border-2 border-[#27415b] bg-[#192530]"
          >
            <ShareIcon />
          </button>
          <button
            aria-label="Añadir"
            className="flex h-[132px] w-[132px] items-center justify-center rounded-full border-2 border-[#27415b] bg-[#192530]"
          >
            <PlusIcon />
          </button>
        </div>
        <h1 className="mt-14 text-[80px] leading-[104px] font-bold text-white">Martes, 1 septiembre</h1>
      </header>

      <main className="mt-[26px]">
        <section className="mx-12 rounded-[50px] border-[3px] border-[#2d3239] bg-[#1e242b] px-[45px] pt-12 pb-[18px]">
          <div className="flex h-[102px] items-center justify-between">
            <div className="flex items-center gap-[30px]">
              <EuFlag />
              <div>
                <h2 className="text-[49px] leading-[60px] font-semibold text-white">Schengen</h2>
                <p className="text-4xl leading-[46px] text-[#8e9199]">Estancia corta</p>
              </div>
            </div>
            <p className="flex items-baseline gap-2 pt-[10px] text-[49px] leading-[100px] text-[#8e9199]">
              <span className="text-[85px] font-bold text-[#ff9633]">85</span>
              <span>/</span>
              <span>90</span>
            </p>
          </div>
          <div className="mt-11 h-9 overflow-hidden rounded-full bg-[#3a3a3b]">
            <div
              className="h-full rounded-full bg-linear-to-r from-[#ff9633] to-[#cb7c32]"
              style={{ width: `${(85 / 90) * 100}%` }}
            />
          </div>
          <div className="mt-[43px] flex justify-between text-[44px] leading-[52px] text-[#8e9199]">
            <span>Quedan 5 días</span>
            <span>Últimos 180 días</span>
          </div>
          <div className="mt-[22px] flex justify-center gap-4">
            <span className="h-[6px] w-[42px] rounded-full bg-[#666a70]" />
            <span className="h-[6px] w-6 rounded-full bg-[#3b4046]" />
          </div>
        </section>

        <section className="mx-12 mt-[60px] overflow-hidden rounded-[50px] border-[3px] border-[#2d3239] bg-[#1e242b]">
          <button className="flex h-[131px] w-full items-center gap-6 px-10 text-[49px] font-semibold text-white">
            Estadísticas · Todo el historial
            <Chevron className="h-[34px] w-[22px] text-[#8e9199]" />
          </button>
          <div className="grid grid-cols-2">
            {stats.map((stat) => (
              <StatCell key={stat.label} {...stat} />
            ))}
          </div>
        </section>

        <section className="mx-10 mt-[54px]">
          <WorldMap />
        </section>
      </main>

      <nav className="mx-auto mt-auto flex w-full max-w-[822px] rounded-full border-[3px] border-[#2e2e2e] bg-[#191919] px-[21px] py-[9px]">
        {tabs.map(({ icon: Icon, label, active }) => (
          <button
            key={label}
            className={
              active
                ? 'relative -mx-3 flex h-[162px] flex-[282] flex-col items-center rounded-full bg-[#3a3a3a] pt-6 text-[31px] leading-10 font-medium text-[#60a9ef]'
                : 'flex h-[162px] flex-[258] flex-col items-center pt-6 text-[31px] leading-10 font-medium text-[#f4f4f4]'
            }
          >
            <Icon />
            <span className="mt-2">{label}</span>
          </button>
        ))}
      </nav>
    </div>
  );
}
